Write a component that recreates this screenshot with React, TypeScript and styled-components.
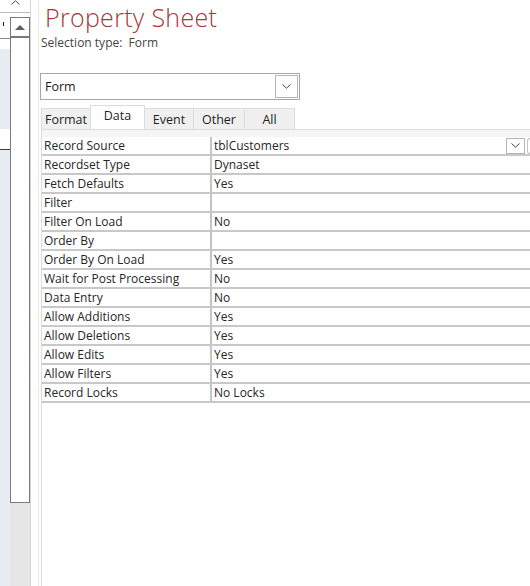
import React from 'react';
import styled, { createGlobalStyle } from 'styled-components';

const FONT = `"Open Sans", "Noto Sans", "Liberation Sans", sans-serif`;

const GlobalStyle = createGlobalStyle`
  html, body {
    margin: 0;
    padding: 0;
    background: #ffffff;
    overflow: hidden;
  }

  body {
    font-family: ${FONT};
    color: #262626;
  }
`;

const rows: [string, string][] = [
  ['Record Source', 'tblCustomers'],
  ['Recordset Type', 'Dynaset'],
  ['Fetch Defaults', 'Yes'],
  ['Filter', ''],
  ['Filter On Load', 'No'],
  ['Order By', ''],
  ['Order By On Load', 'Yes'],
  ['Wait for Post Processing', 'No'],
  ['Data Entry', 'No'],
  ['Allow Additions', 'Yes'],
  ['Allow Deletions', 'Yes'],
  ['Allow Edits', 'Yes'],
  ['Allow Filters', 'Yes'],
  ['Record Locks', 'No Locks'],
];

const tabs = ['Format', 'Data', 'Event', 'Other', 'All'];
const tabWidths = [50, 55, 50, 52, 51];

const Chevron: React.FC<{ up?: boolean }> = ({ up }) => (
  <svg width="9" height="5" viewBox="0 0 9 5">
    <path
      d={up ? 'M0.5 4.5 L4.5 0.8 L8.5 4.5' : 'M0.5 0.5 L4.5 4.2 L8.5 0.5'}
      fill="none"
      stroke="#444"
      strokeWidth="1"
    />
  </svg>
);

export default function App() {
  return (
    <>
      <GlobalStyle />
      <Page>
        <LeftPane>
          <PaneTop>
            <Chevron up />
          </PaneTop>
          <PaneBody>
            <Strip>
              <StripPiece $height={25} $bg="#ffffff" $line="#8a8a8a">
                <Tick />
              </StripPiece>
              <StripPiece $height={10} $bg="#ffffff" />
              <StripPiece $height={80} $bg="#e8ebf0" />
              <StripPiece $height={20} $bg="#ffffff" $line="#3a3a3a" />
              <StripPiece $height={0} $bg="#e9ecf1" $grow />
            </Strip>
            <ScrollBar>
              <ScrollSpacer />
              <ScrollButton>
                <Triangle />
              </ScrollButton>
              <ScrollThumb />
              <ScrollTrack />
            </ScrollBar>
          </PaneBody>
        </LeftPane>

        <Gutter />

        <Sheet>
          <Title>Property Sheet</Title>
          <SelectionType>Selection type:&nbsp; Form</SelectionType>

          <Combo>
            <ComboText>Form</ComboText>
            <ComboButton>
              <Chevron />
            </ComboButton>
          </Combo>

          <TabStrip>
            {tabs.map((t, i) => (
              <Tab key={t} $active={t === 'Data'} style={{ width: tabWidths[i] }}>
                {t}
              </Tab>
            ))}
          </TabStrip>

          <TabPanel>
            <PanelBand />
            <Grid>
              {rows.map(([label, value], i) => (
                <Row key={label}>
                  <LabelCell>{label}</LabelCell>
                  <ValueCell>
                    <ValueText>{value}</ValueText>
                    {i === 0 && (
                      <>
                        <CellButton>
                          <Chevron />
                        </CellButton>
                        <BuilderButton />
                      </>
                    )}
                  </ValueCell>
                </Row>
              ))}
            </Grid>
          </TabPanel>
        </Sheet>
      </Page>
    </>
  );
}

const Page = styled.div`
  display: flex;
  width: 530px;
  height: 586px;
  overflow: hidden;
  background: #ffffff;
`;

const LeftPane = styled.div`
  display: flex;
  flex-direction: column;
  width: 30px;
  flex-shrink: 0;
  border-right: 1px solid #d6d6d6;
`;

const PaneTop = styled.div`
  display: flex;
  justify-content: center;
  align-items: flex-start;
  height: 13px;
  padding-left: 1px;
  border-bottom: 1px solid #b8b8b8;
  box-sizing: border-box;
`;

const PaneBody = styled.div`
  display: flex;
  flex: 1;
`;

const Strip = styled.div`
  display: flex;
  flex-direction: column;
  width: 10px;
`;

const StripPiece = styled.div<{ $height: number; $bg: string; $line?: string; $grow?: boolean }>`
  position: relative;
  height: ${(p) => p.$height}px;
  flex: ${(p) => (p.$grow ? 1 : 'none')};
  background: ${(p) => p.$bg};
  border-bottom: ${(p) => (p.$line ? `1px solid ${p.$line}` : 'none')};
`;

const Tick = styled.span`
  position: absolute;
  left: 3px;
  top: 9px;
  width: 1px;
  height: 4px;
  background: #222;
`;

const ScrollBar = styled.div`
  display: flex;
  flex-direction: column;
  width: 20px;
  background: #e6e6e6;
`;

const ScrollSpacer = styled.div`
  height: 4px;
  background: #ffffff;
`;

const ScrollButton = styled.div`
  display: flex;
  justify-content: center;
  align-items: center;
  height: 18px;
  border: 1px solid #7a7a7a;
  border-bottom: none;
  background: #ffffff;
`;

const Triangle = styled.span`
  width: 0;
  height: 0;
  border-left: 5px solid transparent;
  border-right: 5px solid transparent;
  border-bottom: 5px solid #606060;
`;

const ScrollThumb = styled.div`
  height: 467px;
  border: 1px solid #7a7a7a;
  border-top: 2px solid #7a7a7a;
  background: #ffffff;
  box-sizing: border-box;
`;

const ScrollTrack = styled.div`
  flex: 1;
  background: #e6e6e6;
`;

const Gutter = styled.div`
  width: 7px;
  flex-shrink: 0;
  background: #ffffff;
`;

const Sheet = styled.div`
  display: flex;
  flex-direction: column;
  flex: 1;
  min-width: 0;
  padding-left: 1px;
  border-left: 1px solid #e8e8e8;
`;

const Title = styled.div`
  margin-left: 5px;
  font-size: 25px;
  font-weight: 300;
  line-height: 34px;
  letter-spacing: 0.3px;
  color: #a4373a;
  white-space: nowrap;
`;

const SelectionType = styled.div`
  height: 16px;
  margin-top: 1px;
  margin-left: 1px;
  font-size: 12px;
  line-height: 16px;
  color: #444444;
  white-space: nowrap;
`;

const Combo = styled.div`
  display: flex;
  align-items: center;
  justify-content: space-between;
  width: 260px;
  height: 27px;
  margin-top: 22px;
  padding: 0 1px 0 4px;
  box-sizing: border-box;
  border: 1px solid #a6a6a6;
  background: #ffffff;
`;

const ComboText = styled.span`
  font-size: 12.5px;
  color: #1a1a1a;
`;

const ComboButton = styled.div`
  display: flex;
  align-items: center;
  justify-content: center;
  width: 21px;
  height: 21px;
  border: 1px solid #b4b4b4;
  background: #ffffff;
`;

const TabStrip = styled.div`
  display: flex;
  align-items: flex-end;
  height: 24px;
  margin-top: 5px;
  margin-left: 1px;
`;

const Tab = styled.div<{ $active?: boolean }>`
  display: flex;
  justify-content: center;
  align-items: center;
  box-sizing: border-box;
  height: ${(p) => (p.$active ? 24 : 21)}px;
  padding-top: ${(p) => (p.$active ? 0 : 3)}px;
  padding-bottom: ${(p) => (p.$active ? 3 : 0)}px;
  font-size: 12.5px;
  color: #1e1e1e;
  background: ${(p) => (p.$active ? '#ffffff' : '#f0f0f0')};
  border: 1px solid #dcdcdc;
  border-bottom: none;
  margin-right: -1px;
  white-space: nowrap;
  line-height: 1;
  z-index: ${(p) => (p.$active ? 1 : 0)};
`;

const TabPanel = styled.div`
  display: flex;
  flex-direction: column;
  flex: 1;
  margin-left: 1px;
  border-left: 1px solid #dcdcdc;
  border-top: 1px solid #dcdcdc;
`;

const PanelBand = styled.div`
  height: 7px;
  background: #f5f5f5;
`;

const Grid = styled.div`
  display: flex;
  flex-direction: column;
`;

const Row = styled.div`
  display: flex;
  height: 19px;
  box-sizing: border-box;
  border-bottom: 2px solid #c8c8c8;
`;

const LabelCell = styled.div`
  width: 170px;
  flex-shrink: 0;
  padding-left: 2px;
  box-sizing: border-box;
  font-size: 12px;
  line-height: 17px;
  color: #262626;
  white-space: nowrap;
  overflow: hidden;
  border-right: 2px solid #c4c4c4;
`;

const ValueCell = styled.div`
  display: flex;
  align-items: center;
  flex: 1;
  min-width: 0;
  padding-left: 2px;
`;

const ValueText = styled.span`
  flex: 1;
  font-size: 12px;
  line-height: 17px;
  color: #262626;
  white-space: nowrap;
`;

const CellButton = styled.div`
  display: flex;
  align-items: center;
  justify-content: center;
  width: 19px;
  height: 16px;
  box-sizing: border-box;
  border: 1px solid #b4b4b4;
  background: #ffffff;
  flex-shrink: 0;
`;

const BuilderButton = styled.div`
  width: 8px;
  height: 16px;
  margin-left: 2px;
  margin-right: -5px;
  box-sizing: border-box;
  border: 1px solid #c4c4c4;
  border-right: none;
  border-radius: 3px 0 0 3px;
  flex-shrink: 0;
`;
